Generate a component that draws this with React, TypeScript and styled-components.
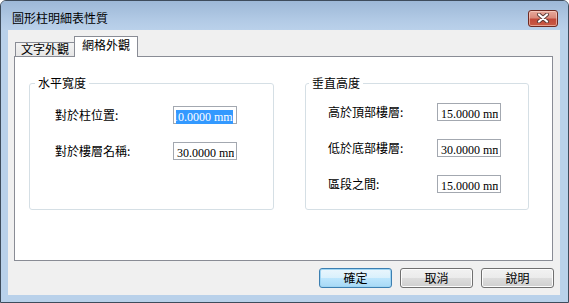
import React from 'react';
import styled, { createGlobalStyle, css } from 'styled-components';

const GlobalStyle = createGlobalStyle`
  html, body { margin: 0; padding: 0; background: #ffffff; }
  body {
    font-family: "Noto Sans CJK TC", "Noto Sans", sans-serif;
    font-size: 12px;
    color: #000;
  }
  * { box-sizing: border-box; }
`;

const Window = styled.div`
  width: 569px;
  height: 303px;
  border: 1px solid #3e4c5c;
  border-radius: 6px 6px 0 0;
  background: #b9d1ea;
  display: flex;
  flex-direction: column;
  overflow: hidden;
`;

const TitleBar = styled.div`
  height: 29px;
  flex: none;
  display: flex;
  align-items: center;
  padding: 5px 10px 0 11px;
  background: linear-gradient(#9db8d7, #b3cbe6 70%, #bad1ea);
`;

const Title = styled.div`
  flex: 1;
  font-size: 12px;
  line-height: 14px;
  color: #000;
`;

const CloseButton = styled.div`
  width: 30px;
  height: 17px;
  border: 1px solid #6e2a22;
  border-radius: 3px;
  background: linear-gradient(#e8a99c, #d98a7b 45%, #c2493a 55%, #c95a43);
  box-shadow: inset 0 0 0 1px rgba(255, 220, 210, 0.55);
  display: flex;
  align-items: center;
  justify-content: center;
`;

const Client = styled.div`
  flex: none;
  height: 265px;
  margin: 0 8px 7px 7px;
  background: #f0f0f0;
  padding: 6px 7px 7px 6px;
  display: flex;
  flex-direction: column;
`;

const TabStrip = styled.div`
  height: 20px;
  flex: none;
  display: flex;
  align-items: flex-end;
  padding-left: 1px;
`;

const Tab = styled.div<{ $active?: boolean }>`
  border: 1px solid #898c95;
  border-bottom: none;
  text-align: center;
  font-size: 12px;
  white-space: nowrap;
  ${(p) =>
    p.$active
      ? css`
          width: 64px;
          height: 21px;
          margin-left: -1px;
          margin-bottom: -1px;
          background: #ffffff;
          position: relative;
          z-index: 1;
          line-height: 16px;
        `
      : css`
          width: 60px;
          height: 14px;
          background: linear-gradient(#f3f3f3, #e6e6e6);
          line-height: 12px;
        `}
`;

const Panel = styled.div`
  height: 205px;
  flex: none;
  border: 1px solid #898c95;
  background: #ffffff;
  display: grid;
  grid-template-columns: 245px 224px;
  column-gap: 31px;
  align-items: start;
  padding: 18px 0 0 14px;
`;

const GroupBox = styled.fieldset`
  margin: 0;
  padding: 0;
  height: 135px;
  min-width: 0;
  border: 1px solid #d5dfe5;
  border-radius: 3px;
`;

const Legend = styled.legend<{ $offset: number }>`
  margin-left: ${(p) => p.$offset}px;
  padding: 0 3px;
  font-size: 12px;
  line-height: 16px;
`;

const Rows = styled.div<{ $labelW: number; $top: number; $left: number }>`
  display: grid;
  grid-template-columns: ${(p) => p.$labelW}px 64px;
  row-gap: 18px;
  align-items: center;
  padding: ${(p) => p.$top}px 0 0 ${(p) => p.$left}px;
`;

const Label = styled.div`
  font-size: 12px;
  line-height: 14px;
  white-space: nowrap;
`;

const Field = styled.div`
  width: 64px;
  height: 18px;
  border: 1px solid #a3a8b0;
  background: #ffffff;
  padding: 0 2px;
  display: flex;
  align-items: center;
`;

const Clip = styled.div`
  flex: 1;
  overflow: hidden;
  white-space: nowrap;
`;

const Value = styled.span<{ $selected?: boolean }>`
  display: inline-block;
  font-family: "Liberation Serif", "Times New Roman", serif;
  font-size: 12px;
  line-height: 14px;
  ${(p) =>
    p.$selected
      ? css`
          margin-left: -4px;
          background: #3399ff;
          color: #ffffff;
        `
      : css`
          padding-left: 1px;
          color: #000;
        `}
`;

const ButtonRow = styled.div`
  display: flex;
  justify-content: flex-end;
  gap: 8px;
  margin-top: 7px;
  margin-right: -1px;
`;

const Button = styled.div<{ $default?: boolean }>`
  width: 73px;
  height: 20px;
  border-radius: 3px;
  font-size: 12px;
  line-height: 18px;
  text-align: center;
  ${(p) =>
    p.$default
      ? css`
          border: 1px solid #3c7fb1;
          background: linear-gradient(#eaf6fd, #d9f0fc 50%, #bee6fd 50%, #a7d9f5);
          box-shadow: inset 0 0 0 1px #9fd5f3;
        `
      : css`
          border: 1px solid #707070;
          background: linear-gradient(#f2f2f2, #ebebeb 50%, #dddddd 50%, #cfcfcf);
          box-shadow: inset 0 0 0 1px #fcfcfc;
        `}
`;

type Row = { label: string; value: string; selected?: boolean };

const leftRows: Row[] = [
  { label: '對於柱位置:', value: '10.0000 mm', selected: true },
  { label: '對於樓層名稱:', value: '30.0000 mm' },
];

const rightRows: Row[] = [
  { label: '高於頂部樓層:', value: '15.0000 mm' },
  { label: '低於底部樓層:', value: '30.0000 mm' },
  { label: '區段之間:', value: '15.0000 mm' },
];

const CloseIcon = () => (
  <svg width="14" height="10" viewBox="0 0 14 10">
    <path d="M3 1.5 L11 8.5 M11 1.5 L3 8.5" stroke="#5a3a36" strokeWidth="4" strokeLinecap="round" />
    <path d="M3 1.5 L11 8.5 M11 1.5 L3 8.5" stroke="#ffffff" strokeWidth="2.2" strokeLinecap="round" />
  </svg>
);

const renderRows = (rows: Row[]) =>
  rows.map((r) => (
    <React.Fragment key={r.label}>
      <Label>{r.label}</Label>
      <Field>
        <Clip>
          <Value $selected={r.selected}>{r.value}</Value>
        </Clip>
      </Field>
    </React.Fragment>
  ));

export default function App() {
  return (
    <>
      <GlobalStyle />
      <Window>
        <TitleBar>
          <Title>圖形柱明細表性質</Title>
          <CloseButton>
            <CloseIcon />
          </CloseButton>
        </TitleBar>
        <Client>
          <TabStrip>
            <Tab>文字外觀</Tab>
            <Tab $active>網格外觀</Tab>
          </TabStrip>
          <Panel>
            <GroupBox>
              <Legend $offset={5}>水平寬度</Legend>
              <Rows $labelW={118} $top={15} $left={25}>
                {renderRows(leftRows)}
              </Rows>
            </GroupBox>
            <GroupBox>
              <Legend $offset={3}>垂直高度</Legend>
              <Rows $labelW={109} $top={12} $left={22}>
                {renderRows(rightRows)}
              </Rows>
            </GroupBox>
          </Panel>
          <ButtonRow>
            <Button $default>確定</Button>
            <Button>取消</Button>
            <Button>說明</Button>
          </ButtonRow>
        </Client>
      </Window>
    </>
  );
}
